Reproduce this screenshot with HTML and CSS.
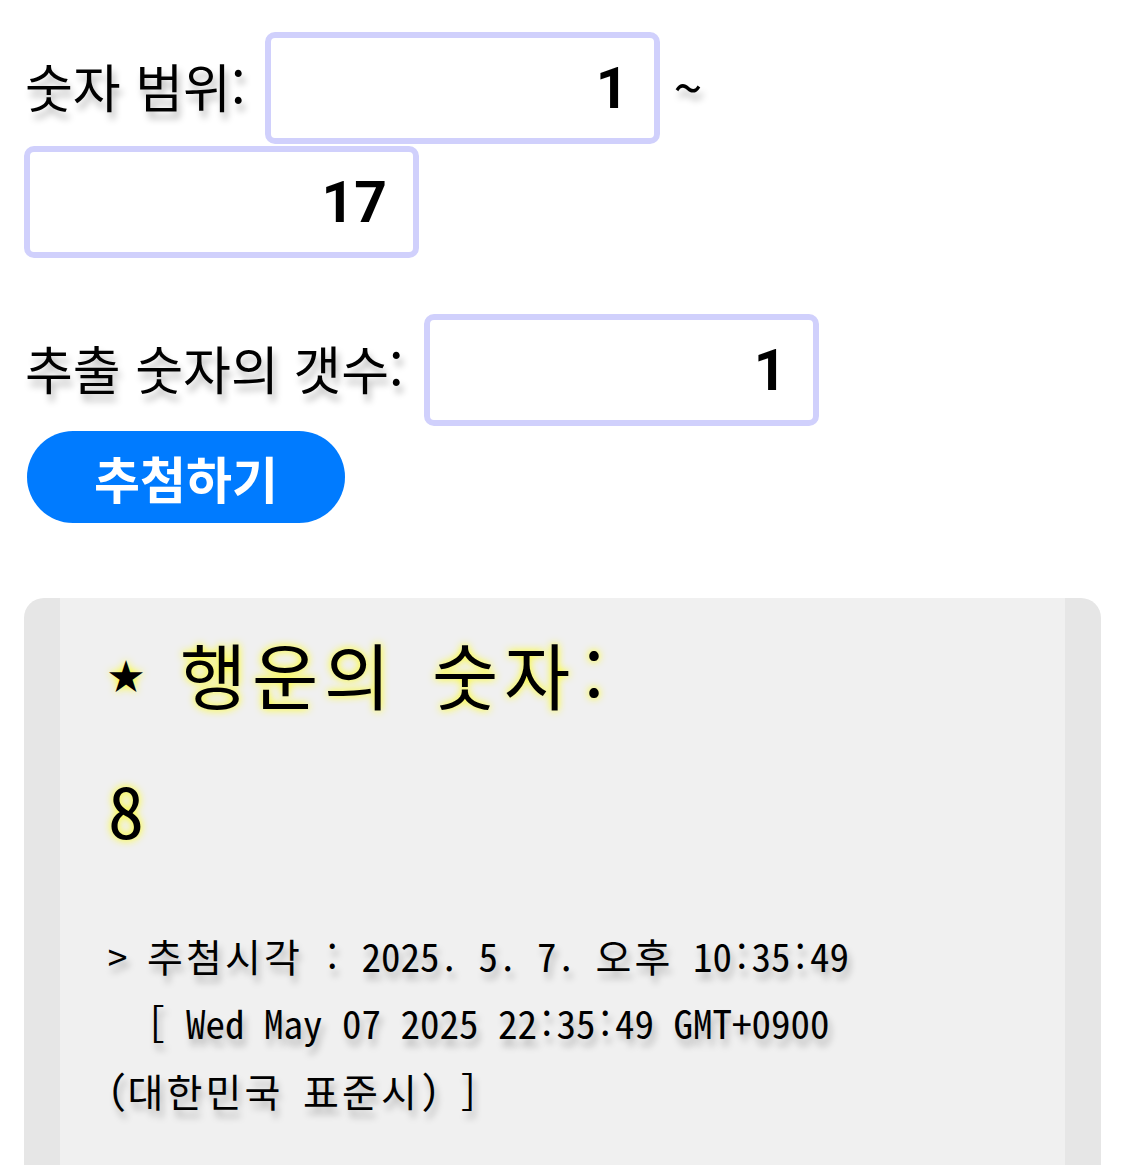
FILE: index.html
```html
<!DOCTYPE html>
<html lang="ko">
<head>
<meta charset="utf-8">
<title>행운의 숫자 추첨</title>
<link rel="stylesheet" href="styles.css">
</head>
<body>
<div class="page">
  <div class="row">
    <span class="label">숫자 범위:</span>
    <input class="num" type="text" value="1">
    <span class="label tilde">~</span>
  </div>
  <div class="row row-tight">
    <input class="num" type="text" value="17">
  </div>
  <div class="row row-count">
    <span class="label">추출 숫자의 갯수:</span>
    <input class="num" type="text" value="1">
  </div>
  <button class="draw" type="button">추첨하기</button>
  <div class="result">
    <div class="title"><span class="star">★</span> <span class="ko">행운의</span> <span class="ko">숫자</span>:</div>
    <div class="lucky">8</div>
    <div class="stamp">
      <div class="line">&gt; <span class="ko">추첨시각</span> : 2025. 5. 7. <span class="ko">오후</span> 10:35:49</div>
      <div class="line">  [ Wed May 07 2025 22:35:49 GMT+0900</div>
      <div class="line">(<span class="ko">대한민국</span> <span class="ko">표준시</span>) ]</div>
    </div>
  </div>
</div>
</body>
</html>
```
FILE: styles.css
```css
html, body {
  margin: 0;
  padding: 0;
  background: #ffffff;
}
body {
  font-family: "Noto Sans CJK KR", "Noto Sans", sans-serif;
  color: #000;
}
.page {
  padding: 32px 24px 0 24px;
}
.row {
  display: flex;
  align-items: baseline;
  gap: 20px;
}
.row-tight {
  margin-top: 2px;
}
.row-count {
  margin-top: 56px;
}
.label {
  font-size: 52px;
  line-height: 1.2;
  text-shadow: 3px 7px 7px rgba(0, 0, 0, 0.28);
  padding-left: 1px;
}
.tilde {
  margin-left: -8px;
}
.num {
  box-sizing: border-box;
  width: 395px;
  height: 112px;
  border: 6px solid #d0d0fc;
  border-radius: 10px;
  padding: 0 26px 0 30px;
  margin: 0;
  font-family: Roboto, "Noto Sans", sans-serif;
  font-weight: 700;
  font-size: 57px;
  text-align: right;
  color: #000;
  background: #fff;
  outline: none;
}
.draw {
  display: block;
  margin: 5px 0 0 3px;
  width: 318px;
  height: 92px;
  border: none;
  border-radius: 46px;
  background: #007bff;
  color: #fff;
  font-family: "Noto Sans CJK KR", sans-serif;
  font-weight: 700;
  font-size: 50px;
  line-height: 92px;
  padding: 0;
}
.result {
  margin-top: 75px;
  background: #f0f0f0;
  border-left: 36px solid #e6e6e6;
  border-right: 36px solid #e6e6e6;
  border-radius: 20px 20px 0 0;
  padding: 25px 48px 40px 48px;
  font-family: "Noto Sans Mono CJK KR", "Noto Sans CJK KR", monospace;
  min-height: 560px;
}
.ko {
  letter-spacing: 0.08em;
}
.title {
  font-size: 72px;
  line-height: 1.4;
  white-space: pre;
  text-shadow: 0 0 8px #ffff00;
}
.star {
  display: inline-block;
  width: 36px;
  font-size: 36px;
  vertical-align: 14px;
  text-align: left;
}
.lucky {
  margin-top: 34px;
  font-size: 72px;
  line-height: 1.4;
  text-shadow: 0 0 8px #ffff00;
}
.stamp {
  margin-top: 63px;
  font-size: 39px;
}
.line {
  line-height: 67.5px;
  white-space: pre;
  text-shadow: 3px 7px 7px rgba(0, 0, 0, 0.25);
}
```
